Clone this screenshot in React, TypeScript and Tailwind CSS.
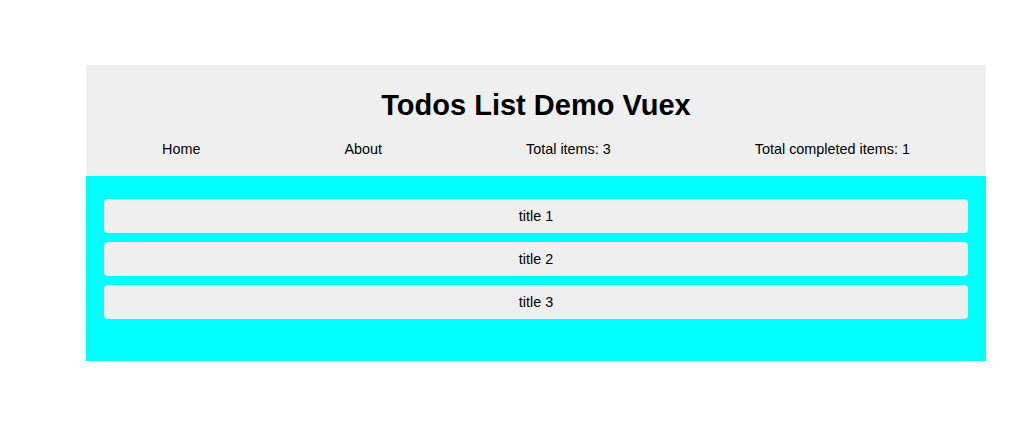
const todos = [
  { id: 1, title: 'title 1' },
  { id: 2, title: 'title 2' },
  { id: 3, title: 'title 3' },
];

const App = () => {
  return (
    <div className="min-h-[424px] bg-white pt-[65px] pl-[86px] font-['Liberation_Sans',Arial,sans-serif] text-black">
      <div className="w-[900px]">
        <header className="bg-[#efefef] pt-[24px] pb-[19px]">
          <h1 className="text-center text-[29px] leading-[32px] font-bold">Todos List Demo Vuex</h1>
          <nav className="mt-[20px] flex justify-around text-[14.4px] leading-[16px]">
            <span className="pl-[4px]">Home</span>
            <span>About</span>
            <span>Total items: 3</span>
            <span className="pr-[4px]">Total completed items: 1</span>
          </nav>
        </header>

        <div className="bg-[#00ffff] px-[18px] pt-[23px] pb-[42px]">
          <ul className="flex flex-col gap-[9px]">
            {todos.map((todo) => (
              <li
                key={todo.id}
                className="flex h-[34px] items-center justify-center rounded-[4px] bg-[#efefef] pt-[2px] text-[14.4px]"
              >
                {todo.title}
              </li>
            ))}
          </ul>
        </div>
      </div>
    </div>
  );
};

export default App;
